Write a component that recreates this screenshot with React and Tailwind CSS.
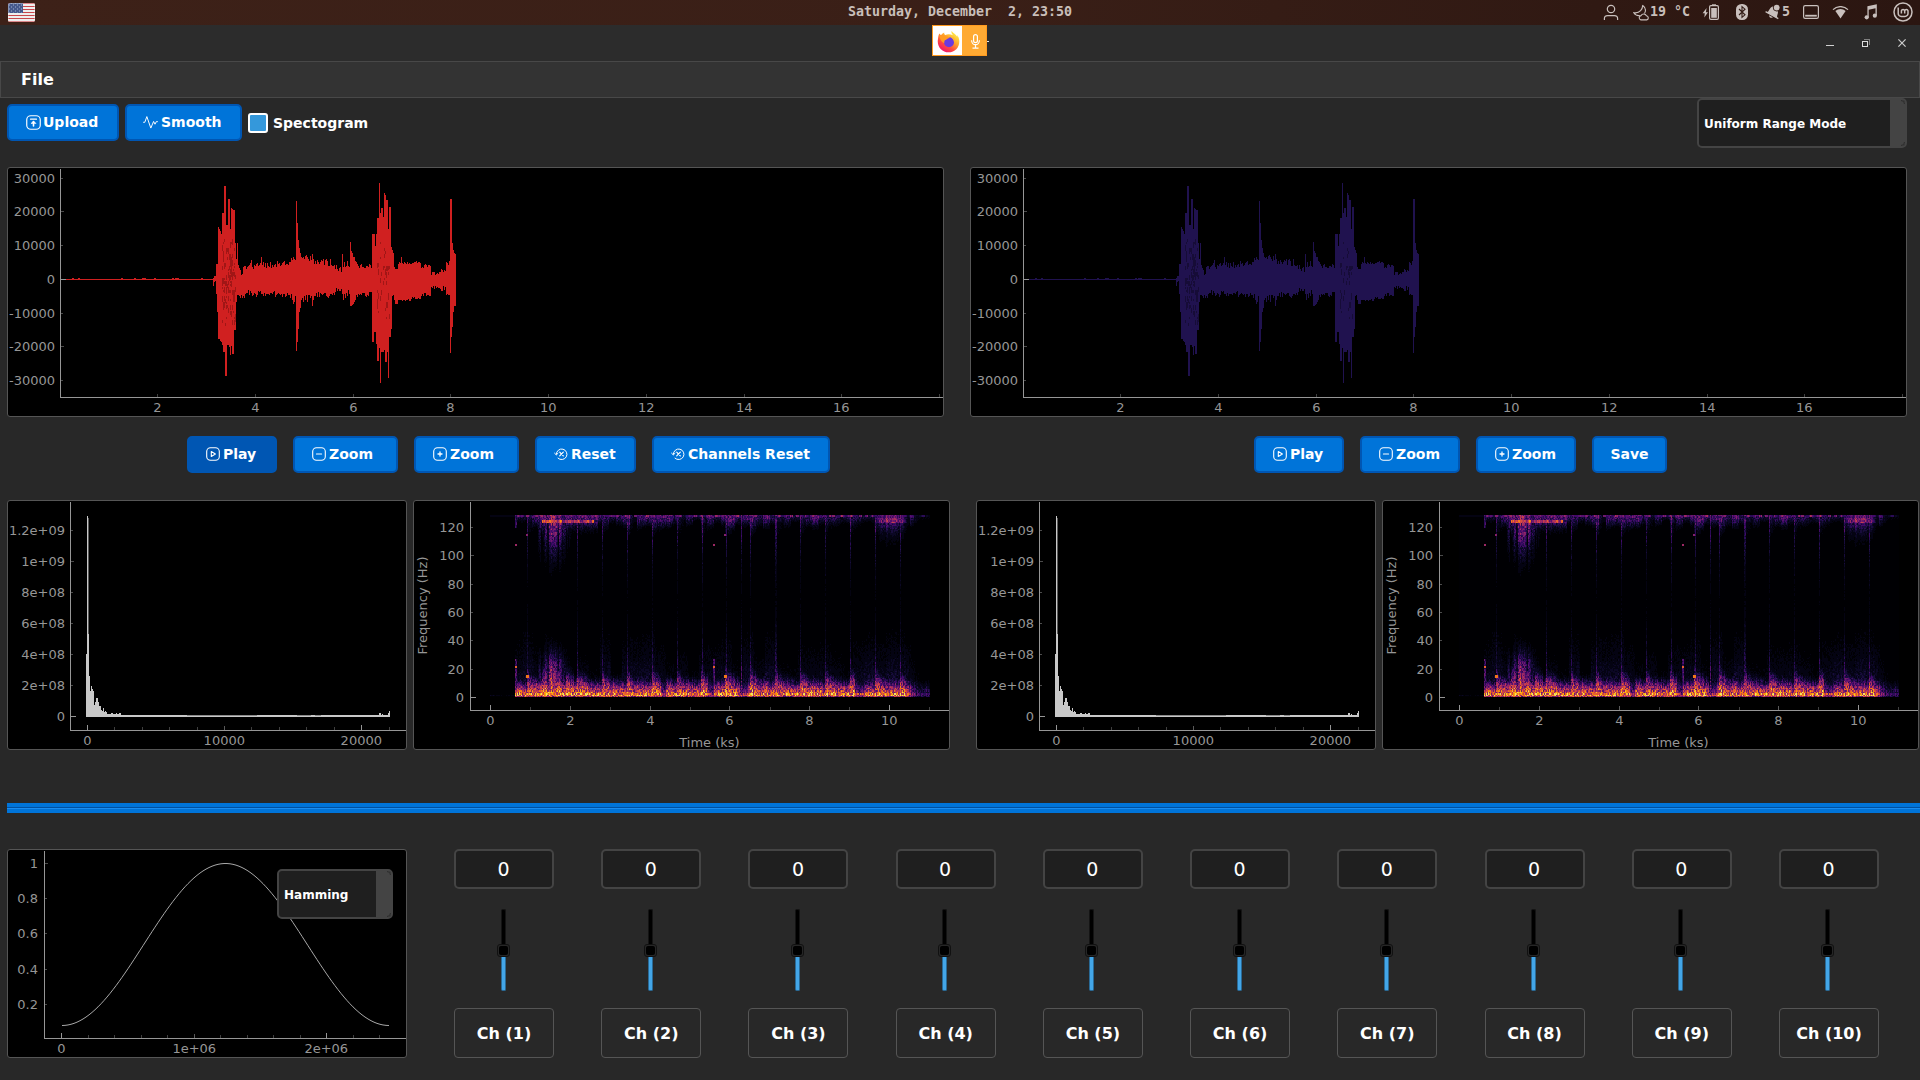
import React from "react";

const AXIS = "#969696";

/* ---------- deterministic noise ---------- */
function noise(a, b = 0) {
  let h = (Math.imul(a + 17, 374761393) + Math.imul(b + 101, 668265263)) | 0;
  h = Math.imul(h ^ (h >>> 13), 1274126177);
  h ^= h >>> 16;
  return (h >>> 0) / 4294967296;
}

/* ---------- waveform samples: column, height above zero, depth below ---------- */
const PEAKS = [
  [206, 1, 6], [207, 3, 2], [208, 3, 1], [209, 15, 14], [210, 15, 32], [211, 52, 59], [212, 50, 59], [213, 48, 61],
  [214, 45, 62], [215, 66, 65], [216, 66, 72], [217, 93, 72], [218, 93, 96], [219, 54, 96], [220, 54, 65],
  [221, 80, 65], [222, 80, 67], [223, 50, 75], [224, 71, 66], [225, 70, 74], [226, 69, 74], [227, 69, 50],
  [228, 36, 50], [229, 20, 22], [230, 36, 15], [231, 14, 15], [232, 11, 16], [233, 9, 18], [234, 4, 15],
  [235, 5, 18], [236, 12, 16], [237, 13, 18], [238, 13, 14],
  [244, 19, 13], [254, 22, 14], [285, 19, 20], [286, 22, 24], [287, 20, 22], [288, 19, 16],
  [289, 78, 71], [290, 56, 62], [291, 39, 49], [292, 31, 32], [293, 26, 28], [294, 22, 20], [295, 21, 18],
  [296, 22, 22], [297, 20, 16], [298, 23, 20], [299, 24, 15], [300, 22, 22], [301, 20, 15], [302, 18, 15],
  [303, 23, 18], [304, 19, 16], [305, 25, 26], [306, 20, 20],
  [316, 20, 14], [335, 25, 14], [336, 12, 20], [342, 12, 14], [343, 37, 26], [344, 28, 26], [345, 26, 25],
  [346, 22, 24], [347, 22, 22], [348, 18, 20], [349, 17, 15],
  [365, 45, 62], [366, 45, 62], [367, 45, 52], [368, 33, 52], [369, 45, 64], [370, 61, 81], [371, 61, 81],
  [372, 96, 68], [373, 66, 103], [374, 71, 72], [375, 71, 72], [376, 62, 72], [377, 86, 70], [378, 84, 82],
  [379, 79, 82], [380, 79, 72], [381, 50, 98], [382, 72, 57], [383, 72, 57], [384, 32, 49], [385, 29, 16],
  [386, 26, 15], [387, 12, 20], [388, 10, 24], [389, 10, 24], [390, 10, 24], [391, 15, 20],
  [394, 22, 20], [439, 17, 15], [440, 16, 14], [441, 14, 15], [442, 18, 15], [443, 80, 73], [444, 80, 57],
  [445, 36, 47], [446, 29, 32], [447, 26, 26], [448, 25, 26],
];

/* [from, to, up, down, jitter] */
const BANDS = [
  [239, 269, 13, 13, 7], [270, 282, 15, 14, 6], [283, 288, 19, 16, 5], [307, 323, 16, 15, 7],
  [324, 334, 10, 11, 8], [335, 342, 14, 13, 8], [350, 364, 13, 14, 6], [392, 403, 16, 20, 2],
  [404, 413, 16, 18, 3], [414, 423, 13, 15, 5], [424, 432, 5, 7, 4], [433, 438, 8, 8, 6],
];

function buildWave() {
  const fixed = new Map(PEAKS.map((p) => [p[0], p]));
  let d = "M55 112h152v1h-152z";
  for (let x = 60; x < 206; x++) if (noise(x, 3) > 0.92) d += `M${x} 111h2v1h-2z`;
  for (let x = 206; x <= 448; x++) {
    let up = 4;
    let dn = 4;
    const p = fixed.get(x);
    if (p) {
      up = p[1];
      dn = p[2];
    } else {
      const b = BANDS.find((q) => x >= q[0] && x <= q[1]);
      if (b) {
        up = Math.round(b[2] + (noise(x, 1) - 0.4) * b[4]);
        dn = Math.round(b[3] + (noise(x, 2) - 0.4) * b[4]);
      }
    }
    d += `M${x} ${112 - up}h1v${up + dn + 1}h-1z`;
  }
  return d;
}
const WAVE = buildWave();

function buildWaveShade() {
  let d = "";
  for (const [a, b, k] of [[215, 229, 0.3], [370, 383, 0.14]]) {
    for (let x = a; x < b; x++) {
      for (let y = 72; y < 160; y += 3) {
        const near = 1 - Math.abs(y - 112) / 70;
        if (noise(x, y) < k * near * (0.4 + noise(x, 91) * 1.2)) {
          d += `M${x} ${y}h1v${2 + Math.floor(noise(y, x) * 5)}h-1z`;
        }
      }
    }
  }
  return d;
}
const SHADE = buildWaveShade();

/* ---------- frequency spectrum columns: x, y ---------- */
const FFT = [
  [79, 154], [80, 16], [81, 134], [82, 176], [83, 191], [84, 186], [85, 189], [86, 191], [87, 205], [88, 202],
  [89, 198], [90, 198], [91, 202], [92, 206], [93, 206], [94, 210], [95, 211], [96, 208], [97, 212], [98, 211], [99, 212],
  [100, 214], [101, 214], [102, 214], [103, 214], [104, 213], [105, 213], [106, 214], [107, 214], [108, 214],
  [109, 213], [110, 214], [111, 214], [112, 213], [113, 213],
];
const FFT_PATH =
  FFT.map(([x, y]) => `M${x} ${y}h1V217h-1z`).join("") +
  "M114 215H383V217H114zM372 213h2v3h-2zM375 214h1v2h-1zM381 213h1v3h-1zM382 211h1v5h-1z";

/* ---------- spectrogram ---------- */
const INFERNO = [
  "#010106", "#040312", "#0b0724", "#180c3c", "#2b0b57", "#420a68", "#57106e", "#6e1a6e", "#85216b", "#9c2964",
  "#b1325a", "#c73e4c", "#d94d3d", "#e8602d", "#f3771a", "#fa9008", "#fbaa10", "#f9c72d", "#f3e55d",
];
const HITS = [0.93, 1.3, 1.52, 1.68, 1.9, 2.18, 2.8, 3.43, 4.06, 4.68, 5.3, 5.9, 6.52, 7.15, 7.77, 8.4, 9.02, 9.64, 10.27];
const TALL = [0.93, 2.18, 2.8, 3.43, 4.06, 4.68, 5.3, 5.9, 6.28, 6.52, 7.15, 7.77, 8.4, 9.02, 9.64, 10.27];
const near = (t, a, w) => Math.abs(t - a) < w;

function decayAt(t) {
  let d = 0;
  for (const h of HITS) if (t >= h - 0.02 && t < h + 0.5) d = Math.max(d, Math.exp(-(t - h) / 0.16));
  return d;
}

function grain(col, bin) {
  return (0.48 + 0.68 * noise(col, bin + 200)) * (0.88 + 0.24 * noise(col, 33));
}

function lower(t, f, col, bin) {
  if (t < 0.62) return f > 0.8 && f < 1.8 ? 0.12 * noise(col, 7) : 0.02;
  const decay = decayAt(t);
  const quiet = (t > 4.28 && t < 4.4) || (t > 5.45 && t < 5.6) || (t > 6.25 && t < 6.45) || (t > 9.14 && t < 9.35);
  const wobble = noise(Math.floor(col / 7), 55) * 0.4 + noise(col, 56) * 0.4;
  const reach = 5.8 + decay * 5 + wobble * 3.2;
  let e = 0.83 * Math.exp(-Math.pow(f / (reach * 1.35), 2.2));
  if (f < 1) e *= 0.75;
  if (f >= 1 && f < 3.4) e += 0.08;
  if (quiet) e *= f < 3 ? 0.75 : 0.5;
  const cluster = t > 1.18 && t < 2.05 ? Math.exp(-Math.pow((t - 1.54) / 0.32, 2)) : 0;
  e = Math.max(e, cluster * 0.52 * Math.exp(-Math.pow(f / 30, 3)) * (0.45 + noise(col, 9) * 0.9));
  e = Math.max(e, decay * 0.5 * Math.exp(-f / 13));
  if (t > 9.5 && t < 10.5) e = Math.max(e, 0.42 * Math.exp(-Math.pow(f / 14, 3)));
  e = Math.max(e, 0.2 * Math.exp(-f / 26) * (0.4 + noise(Math.floor(col / 11), 77)));
  for (const h of TALL) if (near(t, h, 0.014)) e = Math.max(e, 0.55 * Math.exp(-f / 30));
  if (near(t, 0.635, 0.02) || near(t, 5.6, 0.02)) {
    if (f > 20.8 && f < 22.4) return 0.7;
    if (f < 27) e = Math.max(e, 0.36);
  }
  if ((near(t, 0.92, 0.035) || near(t, 5.88, 0.035)) && f > 13.8 && f < 15.6) return 0.78;
  if (t > 10.4) e *= Math.max(0.35, 1 - (t - 10.4) * 2.4);
  return e * grain(col, bin);
}

function upper(t, f, col, bin) {
  const g = 128.5 - f;
  if (t < 0.62) return g < 1 ? 0.06 : 0;
  const decay = decayAt(t);
  const patch = noise(Math.floor(col / 7), 55);
  let e = 0.33 * Math.exp(-Math.pow(g / (3.2 + decay * 5 + patch * 3.5), 2)) * (0.35 + patch * 0.9);
  for (const h of TALL) if (near(t, h, 0.014)) e = Math.max(e, 0.4 * Math.exp(-g / 32));
  e = Math.max(e, decay * 0.36 * Math.exp(-g / 8));
  if (near(t, 0.635, 0.02) && g < 9) e = Math.max(e, 0.32);
  if (t > 1.18 && t < 2.7) {
    e = Math.max(e, 0.36 * Math.exp(-Math.pow(g / 9, 2)));
    const c = Math.exp(-Math.pow((t - 1.56) / 0.33, 2));
    e = Math.max(e, c * 0.5 * Math.exp(-Math.pow(g / 26, 2)) * (0.2 + noise(col, 9) * 1.1));
  }
  e *= grain(col, bin);
  if (g < 1.2) e = Math.max(e, 0.08 + noise(Math.floor(col / 3), 4) * 0.5 * (0.5 + 0.5 * noise(col, 5)));
  if (t > 1.28 && t < 2.58 && g > 2.9 && g < 5.1) {
    const spot = noise(Math.floor(col / 3), 12);
    e = Math.max(e, (0.34 + spot * 0.46) * (0.75 + 0.3 * noise(col, bin)));
  }
  if (t > 9.4 && t < 10.55) {
    const c = Math.exp(-Math.pow((t - 10.03) / 0.38, 4));
    const band = g > 1.5 && g < 5.5 ? 0.56 : 0.42 * Math.exp(-Math.max(0, g - 4) / 8);
    e = Math.max(e, c * band * (0.35 + noise(col, bin) * 0.5 + noise(Math.floor(col / 2), 61) * 0.4));
  }
  if ((near(t, 0.635, 0.02) || near(t, 5.6, 0.02)) && f > 107 && f < 108.3) return 0.48;
  if ((near(t, 0.92, 0.03) || near(t, 5.88, 0.03)) && f > 114.2 && f < 115.6) return 0.45;
  return t > 10.6 ? e * 0.5 : e;
}

function buildSpectrogram() {
  const paths = INFERNO.map(() => "");
  const n = INFERNO.length;
  for (let c = 0; c < 440; c++) {
    const t = c / 39.93;
    let start = 0;
    let last = -1;
    for (let r = 0; r <= 182; r++) {
      let k = -1;
      if (r < 182) {
        const f = 128.5 - (r / 182) * 128.5;
        const bin = Math.floor(f);
        const e = f > 72 ? upper(t, f, c, bin) : lower(t, f, c, bin);
        k = Math.max(0, Math.min(n - 1, Math.floor(e * n)));
      }
      if (k !== last) {
        if (last > 0) paths[last] += `M${77 + c} ${15 + start}h1v${r - start}h-1z`;
        last = k;
        start = r;
      }
    }
  }
  return paths;
}
const SPECTRO = buildSpectrogram();

/* ---------- plot frame with axes ---------- */
function Plot({ w, h, ax, ay, labelX, labelY, yTicks, xTicks, children }) {
  return (
    <div className="shrink-0 overflow-hidden rounded-[3px] border border-[#555555] bg-black">
      <svg
        width={w - 2}
        height={h - 2}
        viewBox={`1 1 ${w - 2} ${h - 2}`}
        className="block font-['DejaVu_Sans'] text-[13px]"
        fill={AXIS}
      >
        {children}
        <g shapeRendering="crispEdges" fill={AXIS}>
          <rect x={ax} y={2} width={1} height={ay - 1} />
          <rect x={ax} y={ay} width={w - ax} height={1} />
          {yTicks.map(([y, , len = 2]) => (
            <rect key={y} x={ax + 1} y={y} width={len} height={1} opacity={len > 3 ? 1 : 0.5} />
          ))}
          {xTicks.map(([x, , len = 3]) => (
            <rect key={x} x={x} y={ay - len} width={1} height={len} opacity={len > 4 ? 1 : len > 3 ? 0.6 : 0.42} />
          ))}
        </g>
        {yTicks.map(([y, label]) =>
          label ? (
            <text key={y} x={labelX} y={y + 5} textAnchor="end">{label}</text>
          ) : null
        )}
        {xTicks.map(([x, label]) =>
          label ? (
            <text key={x} x={x + 0.3} y={labelY} textAnchor="middle">{label}</text>
          ) : null
        )}
      </svg>
    </div>
  );
}

function WavePlot({ color, shade }) {
  return (
    <Plot
      w={937}
      h={250}
      ax={53}
      ay={230}
      labelX={48}
      labelY={245}
      yTicks={[[11, "30000"], [44, "20000", 3], [78, "10000"], [112, "0", 5], [146, "-10000"], [179, "-20000", 3], [213, "-30000"]]}
      xTicks={[[150, "2"], [248, "4"], [346, "6"], [443, "8"], [541, "10"], [639, "12"], [737, "14"], [834, "16"], [932, null]]}
    >
      <path d={WAVE} fill={color} shapeRendering="crispEdges" />
      <path d={SHADE} fill={shade} opacity={0.4} shapeRendering="crispEdges" />
    </Plot>
  );
}

function FftPlot() {
  return (
    <Plot
      w={400}
      h={250}
      ax={63}
      ay={230}
      labelX={58}
      labelY={245}
      yTicks={[[30, "1.2e+09"], [61, "1e+09", 3], [92, "8e+08"], [123, "6e+08"], [154, "4e+08"], [185, "2e+08"], [216, "0", 5]]}
      xTicks={[
        [80, "0", 5], [107, null], [135, null], [162, null], [190, null], [217, "10000", 4], [244, null], [272, null],
        [299, null], [327, null], [354, "20000", 5], [382, null],
      ]}
    >
      <path d={FFT_PATH} fill="#c8c8c8" shapeRendering="crispEdges" />
      <path d="M81 18h1v116h-1z" fill="#5a5a5a" shapeRendering="crispEdges" />
      <path d="M180 215h70v1h-70zM290 215h14v1h-14zM308 215h6v1h-6z" fill="#8a8a8a" shapeRendering="crispEdges" />
    </Plot>
  );
}

function SpectroPlot() {
  return (
    <Plot
      w={537}
      h={250}
      ax={57}
      ay={210}
      labelX={51}
      labelY={225}
      yTicks={[[27, "120"], [55, "100", 3], [84, "80"], [112, "60"], [140, "40"], [169, "20"], [197, "0", 5]]}
      xTicks={[
        [77, "0", 5], [117, null], [157, "2", 4], [197, null], [237, "4", 4], [277, null], [316, "6", 4], [357, null],
        [396, "8", 4], [436, null], [476, "10", 5], [516, null],
      ]}
    >
      <g shapeRendering="crispEdges">
        <rect x={77} y={15} width={440} height={182} fill="#000003" />
        {SPECTRO.map((d, i) => (d ? <path key={i} d={d} fill={INFERNO[i]} /> : null))}
      </g>
      <text x={296.5} y={247} textAnchor="middle">Time (ks)</text>
      <text transform="translate(14 105.5) rotate(-90)" textAnchor="middle">Frequency (Hz)</text>
    </Plot>
  );
}

const HAMMING = Array.from({ length: 110 }, (_, i) => {
  const u = i / 109;
  const v = 0.54 - 0.46 * Math.cos(2 * Math.PI * u);
  return `${(55 + u * 327).toFixed(2)},${(14.5 + ((1 - v) / 0.92) * 162).toFixed(2)}`;
}).join(" ");

function HammingPlot() {
  const minor = [81, 107, 134, 160, 213, 240, 266, 293, 346, 372].map((x) => [x, null]);
  return (
    <Plot
      w={400}
      h={209}
      ax={37}
      ay={189}
      labelX={31}
      labelY={204}
      yTicks={[[14, "1", 3], [49, "0.8"], [84, "0.6"], [120, "0.4"], [155, "0.2"]]}
      xTicks={[[54, "0", 5], [187, "1e+06", 4], [319, "2e+06", 5], ...minor]}
    >
      <polyline points={HAMMING} fill="none" stroke="#a8a8a8" strokeWidth="1" />
    </Plot>
  );
}

/* ---------- button icons ---------- */
function Icon({ size = 14, children }) {
  return (
    <svg
      width={size}
      height={size}
      viewBox="0 0 14 14"
      fill="none"
      stroke="#ffffff"
      strokeWidth="1.1"
      strokeLinecap="round"
      strokeLinejoin="round"
      className="shrink-0"
    >
      {children}
    </svg>
  );
}
const Frame = () => <rect x="0.7" y="0.7" width="12.6" height="12.6" rx="3.8" />;
const UploadIcon = () => (
  <Icon size={15}>
    <Frame />
    <path d="M4.2 3.9h5.6" />
    <path d="M7 10.3V6.4" strokeWidth="1.5" />
    <path d="M4.9 7.7L7 5.6l2.1 2.1z" fill="#ffffff" strokeWidth="0.6" />
  </Icon>
);
const SmoothIcon = () => (
  <Icon size={15}>
    <path d="M0.5 6.8h1.2L3.6 1.500l3.700 10.700L9.900 6l1.300 2.600L12.400 6.200h1.100" strokeWidth="0.9" />
  </Icon>
);
const PlayIcon = () => (
  <Icon>
    <Frame />
    <path d="M5.3 4.5v5l4.1-2.5z" />
  </Icon>
);
const MinusIcon = () => (
  <Icon>
    <Frame />
    <path d="M4.4 7h5.2" />
  </Icon>
);
const PlusIcon = () => (
  <Icon>
    <Frame />
    <path d="M5 7h4M7 5v4" strokeWidth="1.3" />
  </Icon>
);
const ResetIcon = () => (
  <Icon>
    <path d="M2.300 7.200a5.300 5.300 0 1 1 1.700 4M0.600 6.200L2.300 7.900l1.700-1.600" strokeWidth="1" />
    <path d="M5.700 5.200l3.600 3.600M9.300 5.200L5.700 8.800" strokeWidth="1.200" />
  </Icon>
);

function Button({ icon, children, className = "", active = false }) {
  return (
    <button
      className={
        "flex h-[37px] shrink-0 items-center gap-[3px] rounded-[5px] border-2 border-[#0056b3] pb-px text-[14px] leading-none font-bold text-white " +
        (active ? "bg-[#0056b3] " : "bg-[#0074d9] ") +
        className
      }
    >
      {icon}
      <span>{children}</span>
    </button>
  );
}

function Combo({ children, className }) {
  return (
    <div
      className={
        "flex h-[50px] shrink-0 items-stretch overflow-hidden rounded-[5px] border-2 border-[#444444] bg-[#1f1f1f] text-[12px] font-bold text-white " +
        className
      }
    >
      <span className="flex flex-1 items-center pt-[2px] pl-[5px] whitespace-nowrap">{children}</span>
      <span className="relative w-[15px] bg-[#444444]">
        <svg width="5" height="46" viewBox="0 0 5 46" className="absolute top-0 right-0" fill="none" stroke="#2c2c2c">
          <path d="M1 0.5a3.5 3.5 0 0 1 3.5 3.5M1 45.5a3.5 3.5 0 0 0 3.5-3.5" />
        </svg>
      </span>
    </div>
  );
}

function Channel({ n }) {
  return (
    <div className="flex w-[100px] flex-col items-center">
      <div className="flex h-10 w-full items-center justify-center rounded-[5px] border-2 border-[#444444] bg-[#1f1f1f] pr-px text-[19px] leading-none text-white">
        0
      </div>
      <div className="mt-5 flex h-[82px] w-[13px] -translate-x-px flex-col items-center">
        <div className="h-[35px] w-[5px] rounded-t-[2px] border-x border-t border-[#141414] bg-black" />
        <div className="h-[13px] w-[13px] shrink-0 rounded-[3px] border border-[#111111] bg-[#262626] p-px">
          <div className="h-full w-full rounded-[2px] bg-black" />
        </div>
        <div className="w-[5px] flex-1 rounded-b-[2px] border-x border-b border-[#2a6a96] bg-[#43a6e8]" />
      </div>
      <button className="mt-[17px] flex h-[50px] w-full items-center justify-center rounded-[4px] border border-[#555555] pt-[2px] text-[16px] font-bold text-white">
        Ch ({n})
      </button>
    </div>
  );
}

/* ---------- desktop panel ---------- */
function Flag() {
  return (
    <svg width="27" height="19" viewBox="0 0 27 19" className="shrink-0 rounded-[2px]" shapeRendering="crispEdges">
      <rect width="27" height="19" fill="#eeeeee" />
      {[0, 1, 2, 3, 4, 5, 6].map((i) => (
        <rect key={i} y={i * 2.92} width="27" height="1.46" fill="#c8474c" />
      ))}
      <rect width="15" height="10" fill="#46598c" />
      {Array.from({ length: 35 }, (_, i) => (
        <rect key={i} x={1 + (i % 7) * 2} y={1 + Math.floor(i / 7) * 2 - (i % 2 ? 1 : 0)} width="1" height="1" fill="#7485ad" />
      ))}
      <rect x="0.5" y="0.5" width="26" height="18" rx="1.5" fill="none" stroke="#ffffff" strokeOpacity="0.35" />
    </svg>
  );
}

const TRAY = "#c9c0bd";

function TopBar() {
  return (
    <header className="grid h-[25px] shrink-0 grid-cols-3 items-center bg-gradient-to-r from-[#3d2118] via-[#3a1f17] to-[#2b1611] pb-px font-['DejaVu_Sans_Mono'] text-[13.3px] leading-none font-bold text-[#c9bfba]">
      <div className="pl-2">
        <Flag />
      </div>
      <div className="text-center whitespace-pre">{"Saturday, December  2, 23:50"}</div>
      <div className="flex items-center justify-end pr-[7px]">
        <svg width="16" height="17" viewBox="0 0 16 17" fill="none" stroke={TRAY} strokeWidth="1.2">
          <circle cx="8" cy="5" r="3.7" />
          <path d="M1.4 16v-1.4c0-1.8 1.5-3 3.2-3h6.8c1.7 0 3.2 1.2 3.2 3V16" />
        </svg>
        <svg width="17" height="17" viewBox="0 0 17 17" fill="none" stroke={TRAY} strokeWidth="1.1" className="ml-[14px]">
          <path d="M9.500 1.200c3 2.200 3.600 5.400 2 8.200M9.500 1.200c.5 3.600-2.700 8.500-8.700 7.500 1.400 2.200 3.700 3.200 6 2.800" />
          <path d="M7.800 15.900a2.200 2.200 0 0 1 .3-4.300 2.900 2.900 0 0 1 5.300.2 2.100 2.100 0 0 1 .4 4.100z" />
        </svg>
        <span className="whitespace-pre">19</span>
        <span className="ml-2">°C</span>
        <svg width="18" height="16" viewBox="0 0 18 16" className="ml-[12px]" fill={TRAY}>
          <path d="M4.600 4L.6 9.200h2.200L2.300 13.500 6 8.200H3.900z" />
          <rect x="7.600" y="1.700" width="8.800" height="13.600" rx="1.300" fill="none" stroke={TRAY} strokeWidth="1.200" />
          <rect x="9.200" y="4" width="5.600" height="9.800" />
          <rect x="10" y="0.300" width="4" height="1.400" />
        </svg>
        <svg width="12" height="16" viewBox="0 0 12 16" className="ml-[16px]">
          <rect width="12" height="16" rx="5.500" fill={TRAY} />
          <path d="M3 5l6 5.800L6 13.400V2.600L9 5.200 3 11" fill="none" stroke="#311a14" strokeWidth="1.100" />
        </svg>
        <svg width="16" height="16" viewBox="0 0 16 16" className="ml-[17px]" fill={TRAY}>
          <path d="M1.500 8.500C4.500 7.800 4 3 8.500 2.200L13 7.500C13.200 10 11.500 11.200 12.200 14z" />
          <path d="M0.600 7.600L13.300 14.600" stroke={TRAY} strokeWidth="1.200" />
          <path d="M4.200 11.200l3.600 2c-1.200 1.500-4 .3-3.600-2z" />
          <circle cx="11.700" cy="3.600" r="3.800" fill="#311a14" />
          <circle cx="11.700" cy="3.600" r="2.900" />
        </svg>
        <span className="ml-[1px]">5</span>
        <svg width="16" height="14" viewBox="0 0 16 14" className="ml-[13px]" fill="none" stroke={TRAY} strokeWidth="1.200">
          <rect x="0.600" y="0.600" width="14.800" height="12.800" rx="1.600" />
          <path d="M2.200 10.700h11.600" strokeWidth="1.800" />
        </svg>
        <svg width="17" height="13" viewBox="0 0 17 13" className="ml-[13px]" fill={TRAY}>
          <path d="M3.400 5.100a7.300 7.300 0 0 1 10.200 0L8.500 12.400z" />
          <path d="M1 3.600a10.800 10.800 0 0 1 15 0" fill="none" stroke={TRAY} strokeWidth="1.200" />
        </svg>
        <svg width="14" height="16" viewBox="0 0 14 16" className="ml-[15px]" fill={TRAY}>
          <path d="M3.400 2.200L12.800.3v11.200h-1.300V4.300L4.700 5.700v7.600H3.400z" />
          <circle cx="2.700" cy="13.300" r="2.100" />
          <circle cx="10.800" cy="11.700" r="2.100" />
        </svg>
        <svg width="20" height="20" viewBox="0 0 20 20" className="ml-[15px]" fill="none" stroke={TRAY} strokeWidth="1.500">
          <circle cx="10" cy="10" r="9" />
          <path d="M5.200 5.400v6a3 3 0 0 0 3 3h3.800a3 3 0 0 0 3-3V8.800a1.700 1.700 0 0 0-3.300 0v2.700M11.700 8.800a1.700 1.700 0 0 0-3.300 0v2.700" />
        </svg>
      </div>
    </header>
  );
}

function Firefox() {
  return (
    <svg width="23" height="23" viewBox="0 0 23 23">
      <defs>
        <linearGradient id="flame" x1="0.85" y1="0.1" x2="0.25" y2="0.95">
          <stop offset="0" stopColor="#fff04a" />
          <stop offset="0.4" stopColor="#ffa22c" />
          <stop offset="0.7" stopColor="#ff4a3e" />
          <stop offset="1" stopColor="#f0156c" />
        </linearGradient>
      </defs>
      <path
        d="M14.600 1c-.5 2 .3 3 1.500 4.200C13 3.800 10 4 8.500 5 7.500 4.600 7 3.500 7.200 2.500 5.600 3.300 4.700 4.300 4 5.300L2.300 3.500C1.500 5 1.200 7 1 9c-1.500 7.500 4 13.300 10.500 13.300S22.500 17.500 22.300 11c-.1-2.500-1-4.700-2.200-6l.3 2C19 4 16 3.500 14.600 1z"
        fill="url(#flame)"
      />
      <circle cx="12" cy="12.300" r="5" fill="#6a3ae0" />
      <path d="M2.500 6c3-1.300 5.500-.8 6.500.6 1.300-.2 3 .2 3.800 1.400-2.300.2-3.200 1.500-4.800 2.300-.9.500-.8 1.600-.6 2.700C5 12.500 3 9.500 2.500 6z" fill="#ff9a22" />
      <path d="M13.800 7.500c2 .7 3.500 2.700 3.200 5 1-1.600.9-3.600-.4-5z" fill="#ffb52f" />
    </svg>
  );
}

function TitleBar() {
  return (
    <div className="grid h-9 shrink-0 grid-cols-[932px_1fr_auto] items-start bg-[#2c2c2c]">
      <span />
      <div className="flex items-start">
        <div className="flex h-[31px] w-[55px] items-stretch border border-[#ff9a1f] bg-[#ffaa33]">
          <span className="flex w-[29px] items-center justify-center bg-white pt-px pl-px">
            <Firefox />
          </span>
          <span className="flex flex-1 items-center justify-center pt-px pl-[3px]">
            <svg width="9" height="15" viewBox="0 0 9 15" fill="none" stroke="#ffffff" strokeWidth="1.200">
              <rect x="2.600" y="0.600" width="3.800" height="8" rx="1.900" />
              <path d="M.6 6.200c0 6 7.800 6 7.800 0M4.500 10.800v3.400M1.500 14.200h6" />
            </svg>
          </span>
        </div>
        <span className="mt-4 h-px w-[2px] bg-[#e8e8e8]" />
      </div>
      <div className="flex items-center gap-7 pt-[14px] pr-[14px]">
        <svg width="8" height="8" viewBox="0 0 8 8" shapeRendering="crispEdges">
          <rect y="6" width="8" height="1" fill="#d0d0d0" />
        </svg>
        <svg width="8" height="8" viewBox="0 0 8 8" fill="none" shapeRendering="crispEdges">
          <path d="M2 0.500h5.500V6" stroke="#808080" />
          <rect x="0.500" y="2.500" width="5" height="5" stroke="#dddddd" />
        </svg>
        <svg width="8" height="8" viewBox="0 0 8 8" stroke="#cccccc" strokeWidth="1.200">
          <path d="M0.400 0.400l7.200 7.200M7.600 0.400L0.400 7.600" />
        </svg>
      </div>
    </div>
  );
}

export default function App() {
  return (
    <div className="flex h-[1080px] w-[1920px] flex-col overflow-hidden bg-[#282828] font-['DejaVu_Sans',sans-serif] text-white">
      <TopBar />
      <TitleBar />
      <nav className="flex h-[37px] shrink-0 items-center border border-[#484848] bg-[#333333] pl-5 text-[16px] font-bold">
        File
      </nav>

      <div className="flex h-[69px] shrink-0 items-start pl-[7px] pr-[13px]">
        <Button icon={<UploadIcon />} className="mt-1.5 w-[112px] pl-[17px] !gap-[2px]">Upload</Button>
        <Button icon={<SmoothIcon />} className="mt-1.5 ml-1.5 w-[117px] pl-4">Smooth</Button>
        <label className="mt-[15px] ml-1.5 flex items-center gap-[5px] text-[14px] leading-none font-bold">
          <span className="h-5 w-5 rounded-[3px] border-2 border-white bg-[#3498db]" />
          Spectogram
        </label>
        <Combo className="ml-auto w-[210px]">Uniform Range Mode</Combo>
      </div>

      <div className="flex shrink-0 gap-[26px] pl-[7px]">
        <WavePlot color="#d02020" shade="#5a0808" />
        <WavePlot color="#20124f" shade="#080414" />
      </div>

      <div className="mt-[19px] mb-[27px] flex shrink-0">
        <div className="flex w-[970px] pl-[187px]">
          <Button icon={<PlayIcon />} active className="w-[90px] pl-[17px]">Play</Button>
          <Button icon={<MinusIcon />} className="ml-4 w-[105px] pl-[17px]">Zoom</Button>
          <Button icon={<PlusIcon />} className="ml-4 w-[105px] pl-[17px]">Zoom</Button>
          <Button icon={<ResetIcon />} className="ml-4 w-[101px] pl-[17px]">Reset</Button>
          <Button icon={<ResetIcon />} className="ml-4 w-[178px] pl-[17px]">Channels Reset</Button>
        </div>
        <div className="flex gap-4 pl-[284px]">
          <Button icon={<PlayIcon />} className="w-[90px] pl-[17px]">Play</Button>
          <Button icon={<MinusIcon />} className="w-[100px] pl-[17px]">Zoom</Button>
          <Button icon={<PlusIcon />} className="w-[100px] pl-[17px]">Zoom</Button>
          <Button className="w-[75px] justify-center">Save</Button>
        </div>
      </div>

      <div className="flex shrink-0 gap-[26px] pl-[7px]">
        <div className="flex shrink-0 gap-1.5">
          <FftPlot />
          <SpectroPlot />
        </div>
        <div className="flex shrink-0 gap-1.5">
          <FftPlot />
          <SpectroPlot />
        </div>
      </div>

      <div className="mt-[53px] ml-[7px] flex h-2.5 shrink-0 flex-col bg-[#0074d9] pt-1">
        <div className="h-px bg-[#0050a0]" />
        <div className="h-px bg-[#1a8cf0]" />
      </div>

      <div className="mt-9 flex shrink-0 pl-[7px]">
        <div className="relative">
          <HammingPlot />
          <Combo className="absolute top-5 left-[270px] w-[116px]">Hamming</Combo>
        </div>
        <div className="ml-[47px] flex w-[1425px] justify-between">
          {[1, 2, 3, 4, 5, 6, 7, 8, 9, 10].map((n) => (
            <Channel key={n} n={n} />
          ))}
        </div>
      </div>
    </div>
  );
}
